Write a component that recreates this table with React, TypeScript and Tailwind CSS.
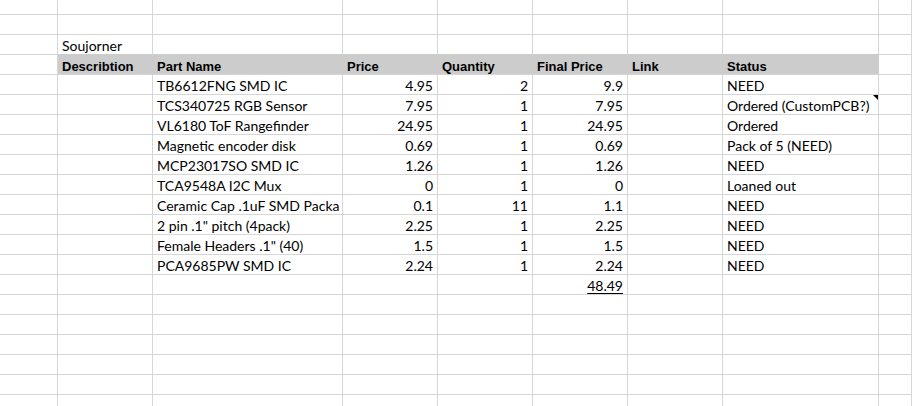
import type { ReactNode } from "react";

type Part = { name: string; price: string; qty: string; total: string; status: string; note?: boolean };

const parts: Part[] = [
  { name: "TB6612FNG SMD IC", price: "4.95", qty: "2", total: "9.9", status: "NEED" },
  { name: "TCS340725 RGB Sensor", price: "7.95", qty: "1", total: "7.95", status: "Ordered (CustomPCB?)", note: true },
  { name: "VL6180 ToF Rangefinder", price: "24.95", qty: "1", total: "24.95", status: "Ordered" },
  { name: "Magnetic encoder disk", price: "0.69", qty: "1", total: "0.69", status: "Pack of 5 (NEED)" },
  { name: "MCP23017SO SMD IC", price: "1.26", qty: "1", total: "1.26", status: "NEED" },
  { name: "TCA9548A I2C Mux", price: "0", qty: "1", total: "0", status: "Loaned out" },
  { name: "Ceramic Cap .1uF SMD Packa", price: "0.1", qty: "11", total: "1.1", status: "NEED" },
  { name: '2 pin .1" pitch (4pack)', price: "2.25", qty: "1", total: "2.25", status: "NEED" },
  { name: 'Female Headers .1" (40)', price: "1.5", qty: "1", total: "1.5", status: "NEED" },
  { name: "PCA9685PW SMD IC", price: "2.24", qty: "1", total: "2.24", status: "NEED" },
];

const headers = ["Describtion", "Part Name", "Price", "Quantity", "Final Price", "Link", "Status"];

function Cell({ children, right, head, top, note, above }: { children?: ReactNode; right?: boolean; head?: boolean; top?: boolean; note?: boolean; above?: boolean }) {
  return (
    <div
      className={`relative flex items-end overflow-hidden whitespace-nowrap border-b border-r px-1 pb-px ${top ? "h-[15px]" : "h-5"} ${right ? "justify-end" : "justify-start"} ${head ? "border-r-[#cccccc] bg-[#cccccc] font-['Liberation_Sans',Arial,sans-serif] text-[13px] font-bold" : "border-r-[#d6d6d6]"} ${above ? "border-b-[#cccccc]" : "border-b-[#d6d6d6]"}`}
    >
      {children}
      {note && <div className="absolute right-0 top-0 h-0 w-0 border-l-[5px] border-t-[5px] border-l-transparent border-t-black" />}
    </div>
  );
}

function EmptyRow({ top }: { top?: boolean }) {
  return (
    <>
      {Array.from({ length: 9 }).map((_, i) => (
        <Cell key={i} top={top} />
      ))}
    </>
  );
}

export default function App() {
  return (
    <div className="h-[406px] w-[912px] overflow-hidden bg-white font-['Lato',sans-serif] text-[14px] leading-none text-black">
      <div className="grid grid-cols-[58px_95px_190px_95px_95px_95px_95px_156px_1fr]">
        <EmptyRow top />
        <EmptyRow />

        {/* title row, bottom edge sits under the grey header fill */}
        <Cell />
        <Cell above>Soujorner</Cell>
        {Array.from({ length: 6 }).map((_, i) => <Cell key={i} above />)}
        <Cell />

        <Cell />
        {headers.map((h) => <Cell key={h} head>{h}</Cell>)}
        <Cell />

        {parts.map((p) => (
          <div key={p.name} className="contents">
            <Cell />
            <Cell />
            <Cell>{p.name}</Cell>
            <Cell right>{p.price}</Cell>
            <Cell right>{p.qty}</Cell>
            <Cell right>{p.total}</Cell>
            <Cell />
            <Cell note={p.note}>{p.status}</Cell>
            <Cell />
          </div>
        ))}

        <Cell />
        <Cell />
        <Cell />
        <Cell />
        <Cell />
        <Cell right><span className="underline decoration-1 underline-offset-2">48.49</span></Cell>
        <Cell />
        <Cell />
        <Cell />

        {Array.from({ length: 6 }).map((_, i) => <EmptyRow key={i} />)}
      </div>
    </div>
  );
}
